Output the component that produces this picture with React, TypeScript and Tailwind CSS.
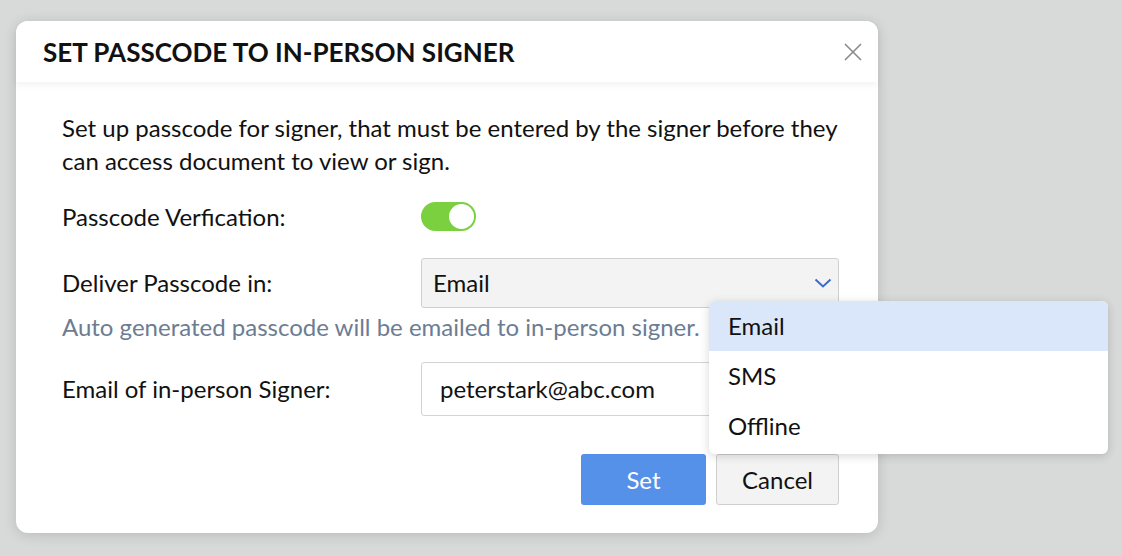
const font = { fontFamily: "Lato, 'Open Sans', sans-serif" };

function Toggle() {
  return (
    <div className="flex h-[29px] w-[55px] items-center justify-end rounded-full bg-[#7bd03f] px-[2px]">
      <div className="h-[25px] w-[25px] rounded-full bg-white" />
    </div>
  );
}

function Row({ label, children }: { label: string; children: React.ReactNode }) {
  return (
    <div className="flex items-center">
      <div className="w-[359px] shrink-0 text-[24px] leading-[28px] text-[#111]">{label}</div>
      {children}
    </div>
  );
}

export default function App() {
  const options = ["Email", "SMS", "Offline"];

  return (
    <div className="h-[556px] w-full overflow-hidden bg-[#d8d9d9] pt-[21px] pl-[16px]" style={font}>
      <div className="relative h-[512px] w-[862px] rounded-[12px] bg-white shadow-[0_2px_14px_rgba(0,0,0,0.14)]">
        {/* Header */}
        <div className="relative z-10 flex h-[61px] items-center justify-between rounded-t-[12px] bg-white pl-[27px] pr-[16px] shadow-[0_3px_6px_rgba(0,0,0,0.05)]">
          <h1 className="text-[26px] font-bold leading-[32px] text-[#111]">SET PASSCODE TO IN-PERSON SIGNER</h1>
          <svg width="18" height="18" viewBox="0 0 18 18" className="text-[#8a8a8a]">
            <path d="M1 1 L17 17 M17 1 L1 17" stroke="currentColor" strokeWidth="1.6" fill="none" />
          </svg>
        </div>

        {/* Body */}
        <div className="flex flex-col pl-[46px] pr-[39px] pt-[29px]">
          <p className="text-[24px] leading-[33px] text-[#111]">
            Set up passcode for signer, that must be entered by the signer before they can access document to view or sign.
          </p>

          <div className="mt-[25px]">
            <Row label="Passcode Verfication:">
              <Toggle />
            </Row>
          </div>

          <div className="mt-[27px]">
            <Row label="Deliver Passcode in:">
              <div className="flex h-[50px] flex-1 items-center justify-between rounded-[3px] border-[1.5px] border-[#cfcfcf] bg-[#f3f3f3] pl-[11px] pr-[6px] text-[24px] leading-[28px] text-[#111]">
                <span>Email</span>
                <svg width="18" height="10" viewBox="0 0 18 10" className="text-[#3a6bc8]">
                  <path d="M1.5 1.5 L9 8.5 L16.5 1.5" stroke="currentColor" strokeWidth="2" fill="none" />
                </svg>
              </div>
            </Row>
          </div>

          <p className="mt-[5px] text-[24px] leading-[28px] text-[#6c7d93]">
            Auto generated passcode will be emailed to in-person signer.
          </p>

          <div className="mt-[21px]">
            <Row label="Email of in-person Signer:">
              <div className="flex h-[54px] flex-1 items-center rounded-[3px] border-[1.5px] border-[#d3d3d3] bg-white pl-[18px] text-[24px] leading-[28px] text-[#111]">
                peterstark@abc.com
              </div>
            </Row>
          </div>

          <div className="mt-[38px] flex justify-end gap-[10px]">
            <button className="h-[51px] w-[125px] rounded-[3px] bg-[#5590e9] text-[24px] leading-[28px] text-white">Set</button>
            <button className="h-[51px] w-[123px] rounded-[3px] border-[1.5px] border-[#cfcfcf] bg-[#f3f3f3] text-[24px] leading-[28px] text-[#111]">
              Cancel
            </button>
          </div>
        </div>

        {/* Dropdown menu */}
        <div className="absolute left-[693px] top-[280px] z-20 w-[399px] overflow-hidden rounded-[6px] bg-white pb-[3px] shadow-[0_2px_10px_rgba(0,0,0,0.16)]">
          {options.map((o, i) => (
            <div
              key={o}
              className={`flex h-[50px] items-center px-[19px] text-[24px] leading-[28px] text-[#111] ${i === 0 ? "bg-[#dae7fa]" : ""}`}
            >
              {o}
            </div>
          ))}
        </div>
      </div>
    </div>
  );
}
